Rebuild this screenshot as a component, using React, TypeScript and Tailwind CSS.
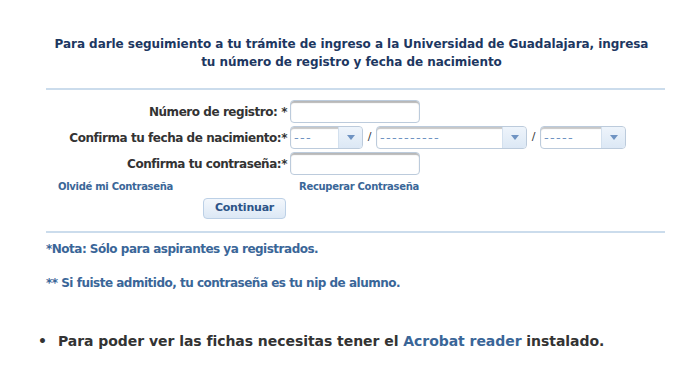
function ChevronDown() {
  return (
    <svg width="8" height="5" viewBox="0 0 8 5" className="fill-[#6f93c2]">
      <path d="M0 0h8L4 5z" />
    </svg>
  )
}

function TextBox() {
  return (
    <div className="w-[130px] h-[23px] rounded-[4px] border border-[#bccbdc] bg-white shadow-[inset_0_2px_1px_rgba(0,0,0,0.28)]" />
  )
}

function Select({ width, placeholder }: { width: string; placeholder: string }) {
  return (
    <div className={`${width} h-[23px] flex rounded-[4px] border border-[#bccbdc] bg-white overflow-hidden shadow-[inset_0_2px_1px_rgba(0,0,0,0.22)]`}>
      <div className="flex-1 flex items-center pl-[3px] text-[13px] font-normal text-[#6f93c2] tracking-[1.3px]">
        {placeholder}
      </div>
      <div className="w-[24px] border-l border-[#d3e0ee] bg-gradient-to-b from-[#eef4fb] to-[#dce8f5] flex items-center justify-center">
        <ChevronDown />
      </div>
    </div>
  )
}

export default function App() {
  return (
    <div className="w-[696px] h-[387px] bg-white font-['DejaVu_Sans',sans-serif] font-bold">
      <div className="ml-[46px] w-[619px] pt-[35px]">
        <h1 className="text-center text-[12px] leading-[18px] tracking-[-0.05px] text-[#1d3761] pr-[8px]">
          Para darle seguimiento a tu trámite de ingreso a la Universidad de Guadalajara, ingresa
          <br />
          tu número de registro y fecha de nacimiento
        </h1>
        <div className="mt-[17px] h-[2px] bg-[#cbdcec]" />

        <div className="mt-[10px] grid grid-cols-[241px_auto] gap-x-[3px] gap-y-[3px] items-center text-[12px] text-[#333333] tracking-[-0.45px]">
          <label className="text-right">Número de registro: *</label>
          <TextBox />
          <label className="text-right">Confirma tu fecha de nacimiento:*</label>
          <div className="flex items-center tracking-normal">
            <Select width="w-[73px]" placeholder="---" />
            <span className="w-[13px] text-center text-[11px] font-normal">/</span>
            <Select width="w-[151px]" placeholder="----------" />
            <span className="w-[13px] text-center text-[11px] font-normal">/</span>
            <Select width="w-[86px]" placeholder="-----" />
          </div>
          <label className="text-right">Confirma tu contraseña:*</label>
          <TextBox />
        </div>

        <div className="mt-[5px] flex text-[10px] leading-[14px] text-[#3a6698] tracking-[-0.3px]">
          <a className="ml-[12px] w-[241px]">Olvidé mi Contraseña</a>
          <a>Recuperar Contraseña</a>
        </div>

        <button className="mt-[4px] ml-[157px] w-[83px] h-[21px] rounded-[4px] border border-[#bcd0e6] bg-gradient-to-b from-[#f3f7fc] to-[#dce8f5] text-[11px] tracking-[-0.2px] text-[#2d5488] flex items-center justify-center">
          Continuar
        </button>

        <div className="mt-[12px] h-[2px] bg-[#cbdcec]" />

        <p className="mt-[8px] text-[12px] leading-[16px] text-[#3a6698] tracking-[-0.5px]">
          *Nota: Sólo para aspirantes ya registrados.
        </p>
        <p className="mt-[18px] text-[12px] leading-[16px] text-[#3a6698] tracking-[-0.5px]">
          ** Si fuiste admitido, tu contraseña es tu nip de alumno.
        </p>
      </div>

      <ul className="mt-[41px] pl-[38px] text-[14px] leading-[18px] text-[#333333] tracking-[-0.05px]">
        <li className="flex">
          <span className="w-[20px]">•</span>
          <span>
            Para poder ver las fichas necesitas tener el{' '}
            <a className="text-[#3a6698]">Acrobat reader</a> instalado.
          </span>
        </li>
      </ul>
    </div>
  )
}
